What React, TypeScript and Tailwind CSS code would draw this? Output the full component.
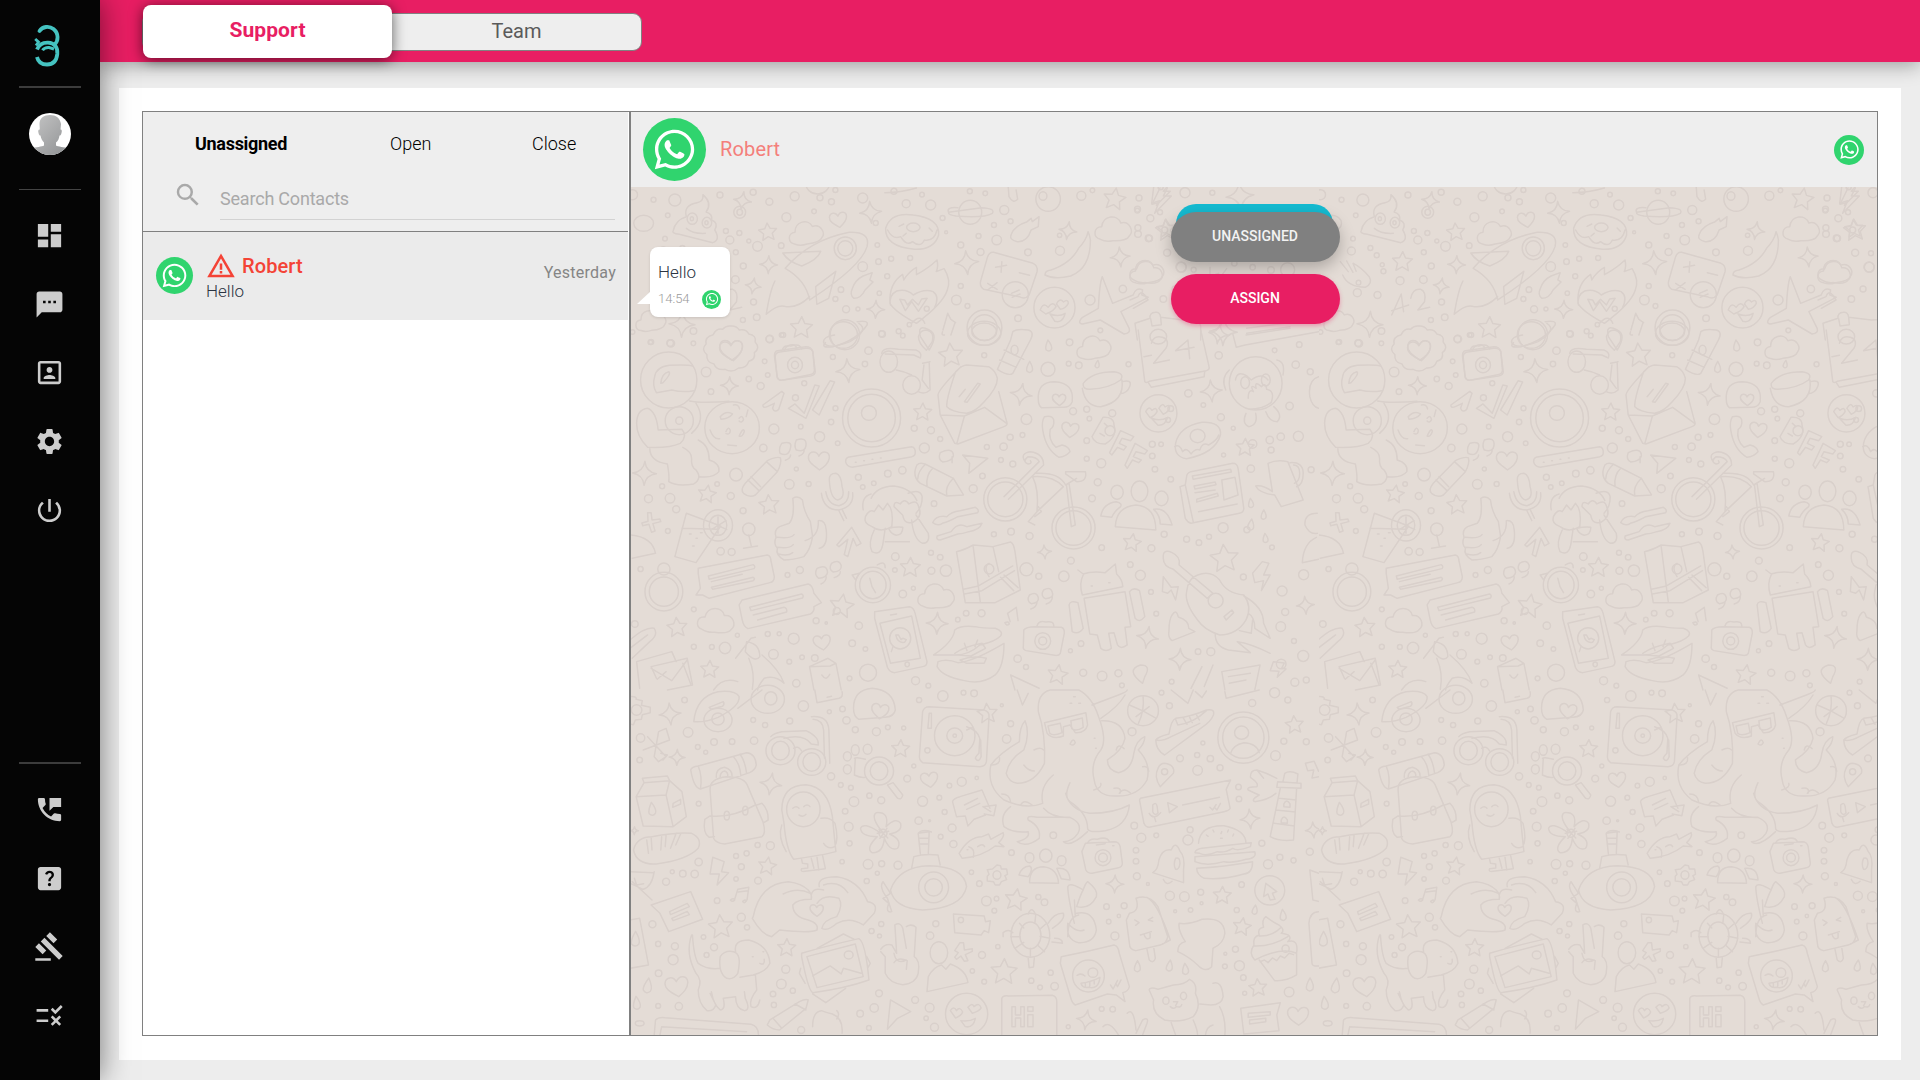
import React from "react";
import {
  MdDashboard,
  MdTextsms,
  MdPortrait,
  MdSettings,
  MdPowerSettingsNew,
  MdPermPhoneMsg,
  MdHelpCenter,
  MdGavel,
  MdRule,
  MdSearch,
  MdWarningAmber,
} from "react-icons/md";
import { FaWhatsapp } from "react-icons/fa";

/* ---------- Chat wallpaper: a 688px wide tile of outlined doodles ---------- */

type Mark = [number, number, number];
type Oval = [number, number, number, number];

interface Band {
  ox: number;
  oy: number;
  sx: number;
  sy: number;
  dots: Mark[];
  stars: Mark[];
  sparks: Mark[];
  hearts: Mark[];
  clouds: Mark[];
  drops: Mark[];
  ovals: Oval[];
  paths: string[];
}

const STAR = "M0-1 L.3-.38 L1-.3 L.48.18 L.62.88 L0 .52 L-.62.88 L-.48.18 L-1-.3 L-.3-.38Z";
const SPARK = "M0-1 Q.12-.12 1 0 Q.12.12 0 1 Q-.12.12-1 0 Q-.12-.12 0-1Z";
const HEART = "M.1.9 C-.5.5-1 .2-.95-.3 C-.85-.85-.2-.85 0-.35 C.3-.95 1-.8 .95-.2 C.9.3.5.6.1.9Z";
const CLOUD = "M-.7.6 C-1.15.5-1.1-.1-.65-.1 C-.6-.75.2-.85.4-.35 C.9-.5 1.15.1.9.35 C.8.6.3.65 0 .65 C-.3.72-.5.7-.7.6Z";
const DROP = "M0-1 Q.7.1.45.6 Q0 1.1-.45.6 Q-.6.1 0-1Z";

const bands: Band[] = [
  {
    ox: -19, oy: -7, sx: 0.3954, sy: 0.3333,
    dots: [
      [52,44,5],[105,59,2.5],[159,60,6],[141,106,2.3],[273,45,3],[357,37,3],[398,65,3.5],[441,112,4.5],[462,49,4.5],[511,94,2.3],[526,53,3],[555,65,3],
      [565,30,2.5],[634,54,5],[713,34,3],[744,71,4],[784,44,2.3],[806,75,5],[836,114,2.5],[905,34,2.5],[944,40,2.3],[992,90,4.5],[966,135,2.5],
      [1008,124,2.5],[1187,47,4.5],[1215,31,2.3],[1329,88,3],[1386,97,2.5],[1330,143,3],[1357,175,3.3],[1404,218,3.5],[1444,220,2.5],[1439,261,5],
      [134,176,2.3],[130,213,4],[178,204,2.5],[194,226,2.5],[208,254,2],[298,180,4],[288,153,2.5],[322,159,2.5],[368,199,4.8],[428,197,2.8],
      [313,217,2.5],[332,258,3],[346,183,2],[211,274,2.5],[253,302,4],[312,299,3.8],[196,345,3.5],[145,338,4],[148,308,2.3],[358,366,3],
      [366,412,3.3],[331,420,2.5],[206,453,3.3],[147,489,3.3],[97,487,2.3],[52,456,2.3],[667,129,2.5],[671,195,2.3],[706,236,2.5],[754,234,2.5],
      [674,245,2.8],[634,260,4.8],[696,289,2.5],[676,340,2.2],[579,329,2.8],[565,357,2.5],[882,318,2.5],[871,360,4.8],[899,378,2.4],[845,157,1.5],
      [882,195,3],[932,216,3.5],[927,168,2.5],[973,180,4.8],[1052,217,3.3],[1133,212,4.5],[1132,166,2.2],[1209,360,5],[1292,327,3.7],[1424,327,3],
      [1235,451,2.4],[1027,415,3.3],[682,461,3],[725,454,2.5],[752,434,2.2],[796,386,2.5],[592,388,3.5],[622,387,2],[398,477,3.5],[429,465,2.3],
    ],
    stars: [[394,156,9],[259,245,10],[1271,57,11],[1403,150,11],[479,443,11]],
    sparks: [[654,97,11],[396,254,9],[357,318,8],[897,248,12],[667,388,9],[1153,152,9],[1285,231,10],[177,433,13],[330,62,9]],
    hearts: [[572,118,9],[301,508,12]],
    clouds: [[491,159,17],[1268,147,18],[1352,277,16],[98,422,15]],
    drops: [],
    ovals: [
      [323,97,15,18],[323,97,7,9],[203,116,13,17],[240,128,12,16],[202,116,4,6],[239,128,4,6],[590,205,28,34],[590,205,19,23],[520,10,30,32],
      [762,142,17,13],[906,97,29,36],[1103,57,31,37],[1090,48,10,13],[942,443,44,53],[942,443,32,39],[1020,344,33,39],[1119,383,52,61],
      [589,464,37,45],[80,130,25,24],
    ],
    paths: [
      "M155 152 Q160 120 188 110 Q180 75 215 68 Q232 65 230 44 Q255 70 238 96 Q255 102 252 120 Q270 128 260 150 Q275 180 255 188 L170 163 Q150 160 155 152Z M188 145 Q205 162 236 160",
      "M438 265 Q500 180 600 157 Q655 155 645 200 Q630 260 500 360 Q490 300 438 265Z M432 219 L528 214 Q520 240 480 258 Q445 245 432 219Z M566 274 L515 320 L518 373 L548 355Z M412 303 Q400 330 390 403 Q420 370 440 380 Q470 385 500 350",
      "M692 145 Q705 95 762 105 Q830 115 826 165 Q815 210 765 208 Q690 200 692 145Z M697 150 Q710 180 730 170 Q745 200 760 185 Q780 205 790 180 Q815 185 822 150 M726 139 l12-7 M736 168 l8-8 M802 144 l8 10",
      "M851 97 Q845 80 875 83 M935 83 Q970 85 962 100 Q940 115 870 108 Q850 105 851 97Z",
      "M1010 162 Q1018 137 1050 125 L1060 115 L1063 125 L1080 110 L1078 140 L1060 150 Q1050 187 1025 185 Q1003 180 1010 162Z",
      "M608 325 Q615 300 635 288 L658 278 L652 300 L660 306 L640 330 Q630 355 612 355 Q600 345 608 325Z",
      "M1204 155 Q1208 165 1210 180 Q1210 265 1160 288 Q1120 300 1095 285 Q1095 272 1110 270 Q1160 250 1180 205 Q1200 180 1204 155Z",
      "M703 370 Q700 310 735 283 L738 300 Q750 275 770 262 L770 284 Q800 265 822 240 Q826 260 820 275 L840 266 Q858 300 848 330 Q838 370 770 430 Q715 395 703 370Z M762 345 Q745 325 720 333 Q700 345 704 375 M762 345 Q790 325 812 335 Q830 350 815 385 M728 358 L742 392 L758 365 L775 394 L797 355 L783 357 L775 375 L760 358 L747 375 L740 360Z",
      "M965 217 L1065 250 Q1078 257 1075 275 L1055 345 Q1045 360 1030 350 L940 328 Q928 318 933 300 L950 230 Q955 215 965 217Z M970 262 l28-6 M986 245 l-2 32 M1030 278 l26 8 M950 310 l24 18 M974 308 l-24 22 M1010 340 l20-10 M1012 352 l20-10",
      "M1240 290 L1266 370 L1318 345 Q1325 320 1342 330 L1340 345 L1356 352 L1287 395 L1308 445 Q1312 460 1295 462 L1235 420 L1190 432 Q1175 430 1190 412 L1230 385 Q1233 310 1240 290Z",
      "M1083 390 q8-25 20-8 q12-20 20-2 q-6 14-26 22Z M1124 372 q8-20 18-6 q12-10 12 4 q-6 15-20 18Z M1108 402 Q1130 412 1146 400 Q1140 430 1120 424Z",
      "M232 405 L256 342 L262 395 M232 392 L275 375 M280 355 Q285 325 305 328 Q320 335 315 365 L298 390 L328 382",
      "M102 245 l20 30 M118 243 l16 34 M134 250 l8 24 M108 285 Q120 320 165 322 Q185 310 175 290 Q155 262 135 250",
      "M1002 20 l2 30 q10 22 22 8 l-4-28 M690 38 q40 0 80-14 M1370 20 l-5 50 l20-8 l-8 14 l35-42 l-18 0 l12-16",
      "M300 438 q14-2 22 12 q18-4 24 12 q20 4 16 24 q14 18-2 32 q4 20-14 26 q-6 22-26 20 q-16 16-34 4 q-22 4-28-16 q-20-4-18-28 q-16-16-2-32 q-4-22 18-28 q8-20 24-16 q8-12 20-10Z",
      "M418 512 L490 500 Q505 500 508 515 L512 570 Q512 582 500 584 L430 601 Q420 602 418 590 L411 530 Q410 515 418 512Z M430 512 q4-16 14-14 q20-10 24 8",
      "M540 488 Q525 505 560 500 Q620 480 645 435 Q650 420 620 425 M775 470 q4-20 20-20 q22 6 15 35 l-15 26 q-20-22-20-41Z M849 400 l8 18 l12 10 M849 400 l-12 50 M867 430 l-10 35 M836 455 q-4 12 5 10",
    ],
  },
  {
    ox: 499, oy: -7, sx: 0.3333, sy: 0.3333,
    dots: [
      [92,22,2.5],[165,38,5],[247,38,2.5],[22,92,2.3],[61,115,3.5],[27,54,3],[24,162,3.3],[58,175,3.2],[154,262,5],[191,269,2.5],
      [313,250,2.7],[368,262,2.7],[473,269,7],[423,270,3.3],[100,357,3.3],[104,150,3],
    ],
    stars: [[108,146,9]],
    sparks: [[330,48,14],[280,455,14]],
    hearts: [],
    clouds: [[50,275,17]],
    drops: [],
    ovals: [[85,470,25,22]],
    paths: [
      "M90 24 L66 73 L86 68 L74 100 L124 48 L100 48 L112 24",
      "M240 262 l0 28 l26-10 l-6 26 l30-40",
      "M0 360 L24 350 Q30 330 44 345 L54 360 L10 385 M15 430 L60 415 Q58 398 76 397 Q90 395 92 412 L160 420 Q210 415 212 440 L212 480 M15 430 L22 480 M62 416 l4 22 l28-4 l-2-22 M350 445 L475 428 M350 460 L480 440",
    ],
  },
  {
    ox: -1, oy: 143, sx: 0.44, sy: 0.3333,
    dots: [
      [48,36,2.5],[93,40,3.7],[144,40,2.3],[318,27,3.7],[348,15,2.5],[306,94,2.3],[313,135,2.3],[270,147,2.7],[297,168,3.5],[173,126,4.8],[184,185,2.8],
      [396,160,2.5],[376,203,3],[461,81,2.5],[542,62,3.7],[534,102,2.7],[573,12,3.3],[620,17,2.3],[467,235,2.5],[457,276,2.7],[388,290,2.3],
      [327,297,5],[303,354,3.7],[431,320,5],[472,340,2.3],[646,295,3],[684,301,3.5],[705,327,2.5],[669,354,5],[805,76,2.5],[901,268,5.3],
      [892,315,2.4],[864,322,3],[849,350,3.7],[811,351,2.5],[843,390,2.4],[870,402,3],[801,438,2.8],[780,476,4],[950,118,7],[999,37,3.3],
      [997,101,2.4],[1020,106,3.3],[1133,103,2.5],[1007,244,3.5],[1038,238,3],[1044,266,2.3],[1096,250,3.5],[1091,302,5],[1038,332,2.8],
      [1038,386,2.5],[1071,400,4.5],[1063,457,3.5],[1050,505,3.4],[1338,76,3.7],[1269,190,3.7],[1303,225,2.3],[1229,236,2.8],[1223,270,2.4],
      [1343,262,3.5],[1371,295,2],[1415,342,4.2],[1454,330,3.7],[1479,320,3.7],[1519,319,5],[1187,343,3],[1207,343,2.3],[1187,378,2.8],[1349,375,2],
      [1411,416,3.7],[1499,228,3.7],[1513,104,3.7],[1546,125,3],[1465,61,2.3],[1521,44,2.8],[1457,360,3],[1193,418,2.8],[1229,448,2.8],[1548,419,3],
      [241,434,6.3],[378,417,2],[362,463,4.8],[406,462,2.5],[257,542,3],[229,498,3.5],[198,462,2.3],[73,469,2.5],[42,506,4],[91,505,4.8],
      [105,538,3.5],[86,603,2.4],[206,664,3.7],[231,666,3.5],[24,717,2.6],[519,442,3],[529,471,2.3],[554,460,2.3],[586,431,3.3],[619,421,3.7],
      [691,521,2.8],[827,613,2.5],[866,605,3.3],[908,618,3.5],[684,668,2.5],[705,682,2.8],[603,680,3.8],[602,720,2.3],[685,722,3.5],[718,722,5.7],
      [644,775,2],[620,792,3.8],[901,718,6.5],[929,739,3],[986,739,5.2],[1002,692,3.4],[1072,653,2.8],[1185,655,3.5],[1214,613,3],[1265,628,3],
      [1348,593,5],[1402,599,3],[1293,638,2.8],[1316,620,2.5],[1160,736,5],[1137,704,2.8],[1184,786,2.4],[1196,851,2.4],[1394,741,3],[1531,734,5],
      [1482,783,5],[1489,846,3.5],[1459,652,2.4],[1479,890,4.8],[1509,933,2.5],[1530,978,5.5],[1480,1002,4.8],[386,720,3.5],[358,735,2.4],
      [470,843,3.5],[423,872,3],[446,879,1.2],[372,926,5.5],[313,912,2.5],[339,911,2],[326,973,4.8],[391,982,2.3],[362,995,2.4],[420,984,3.3],
      [520,887,3.7],[505,940,3.3],[535,957,2.3],[499,1045,2.4],[541,1028,8.5],[649,1052,4],[678,1067,2.4],[764,850,2.8],[799,850,3.5],[745,869,2.3],
      [378,1060,3.7],[216,954,5.7],[145,950,2.5],[186,951,2.4],[244,916,2],[11,882,3.3],[145,838,2.4],[1025,941,2.8],[1001,962,2],[881,986,3.7],
      [900,1011,2.5],[1030,1028,3.5],[1073,1038,4.8],[1110,1030,3.5],[1118,1066,2.4],[1291,965,2.8],[1320,965,4],[1231,1055,2.4],[1511,1057,4],[1537,1050,3],
    ],
    stars: [[729,75,12],[665,246,9],[175,492,9],[316,524,10],[1398,352,9],[1141,638,9],[1351,685,14],[637,712,10],[481,828,12],[107,892,10],[181,1018,9],[972,1034,10]],
    sparks: [[495,122,12],[226,167,9],[889,193,11],[1321,183,11],[33,430,12],[1338,12,10],[942,666,7],[698,880,11],[1176,922,11],[1535,826,9],[1250,988,11]],
    hearts: [[230,60,12],[429,390,11],[1000,298,9],[436,936,9],[975,208,7]],
    clouds: [[1054,52,17],[696,798,18],[196,872,18]],
    drops: [[951,48,6],[908,112,6],[1062,103,4],[1411,520,5],[1440,555,5],[1411,585,6],[1444,625,5]],
    ovals: [
      [375,105,17,23],[375,105,8,11],[549,264,66,87],[549,264,54,71],[543,249,17,22],[232,293,62,78],[112,272,32,42],[112,272,8,11],[88,150,64,84],
      [1201,250,42,56],[1290,318,17,20],[1422,160,60,80],[1398,158,10,18],[1445,150,10,18],[853,508,49,65],[853,508,40,52],[1008,594,49,63],[1008,594,40,52],
      [1107,487,14,21],[1158,484,19,31],[1208,505,15,22],[200,586,33,47],[200,586,20,30],[270,598,14,19],[77,785,43,58],[77,785,33,44],[77,717,14,18],
      [552,765,40,53],[552,765,30,41],[614,925,24,32],[630,1003,5,7],[938,933,18,25],[938,933,9,12],[1331,812,17,22],[805,10,38,36],[805,5,28,26],
      [588,95,20,32],[640,165,20,28],[816,717,11,15],[874,60,8,14],[485,15,32,40],
    ],
    paths: [
      "M340 66 L400 55 Q415 54 416 70 L421 125 Q421 135 410 138 L345 151 Q335 150 334 140 L330 80 Q330 68 340 66Z M350 64 q5-20 15-16 q22-10 25 10",
      "M56 140 Q60 110 90 106 Q130 103 142 108 M56 140 Q50 165 60 188 Q75 185 95 180 Q120 188 145 182 M70 160 Q72 130 88 125 Q95 130 75 158Z",
      "M40 235 Q60 245 64 300 L118 298 Q132 320 114 340 Q90 355 40 352 Q15 320 15 280 Q16 238 40 235Z M135 213 Q160 220 225 214 M45 355 Q45 395 85 402 Q90 440 88 455 Q105 470 145 462 Q165 445 150 420 Q138 410 140 385 Q140 365 120 352 M155 330 Q180 345 180 390 Q205 400 202 425 Q190 445 158 440 M150 220 Q175 270 140 310",
      "M205 260 q14-20 28-8 q-8 14-26 16Z M235 225 q12-4 14 12 M182 300 q8 30 22 26 M222 345 l20 2 M268 240 l-4 20 M248 265 q8-12 10 4 q-4 12-10 4 M218 305 q6-18 10-4 q0 14-10 10 M248 318 q10-28 12-14 q-4 18-12 14",
      "M302 225 L345 184 L350 190 L338 238 Q328 250 324 235 L328 220 L312 230 Q302 236 302 225Z",
      "M360 235 L375 222 L396 250 L420 165 L430 168 L400 265Z M415 240 L455 152 L465 156 L430 255Z",
      "M572 70 Q575 50 610 58 L650 60 Q665 68 660 84 L645 75 L580 72 M605 120 Q625 125 640 135 M680 95 L682 180 Q670 195 655 185 M665 100 L682 95 M668 105 L664 150 L678 175",
      "M440 38 Q450 60 500 35 Q545 0 520-20 M440 38 Q438 20 465 15 M870 5 Q880-5 905 0 Q920 5 910 30 L870 130 Q860 140 835 118 L865 30Z M850 60 l45 28 M840 90 l38 22 M640-20 q20-30 30 0 M660 20 q-8-40 20-20 q22 14 0 60Z",
      "M765 105 L815 110 Q830 120 835 145 Q835 175 805 215 Q785 245 765 250 Q730 245 720 230 Q718 210 740 125 Q755 105 765 105Z M752 110 Q700 180 700 195 L705 255 L738 340 L745 342 L850 290 Q860 285 856 275 L838 185 M705 255 L760 258 L743 340 M760 258 L806 232 L856 280 M748 200 l14-22 M760 215 l30-55 l6 2 l-30 55Z",
      "M1155 0 L1170 155 Q1172 160 1180 154 L1310 122 Q1318 118 1316 110 L1297 0 M1168 80 L1185 76 M1178 158 L1185 172 L1305 140 L1306 125 M1185 40 Q1190 15 1210 22 Q1228 30 1218 55 L1190 100 L1226 90 M1268 30 L1240 62 L1282 52 M1268 30 L1272 86",
      "M1030 160 Q1050 125 1100 125 Q1125 130 1115 150 Q1090 175 1045 178 Q1028 178 1030 160Z M1028 175 Q1035 230 1070 230 Q1125 215 1118 150 M1118 155 q24-8 18 14 q-6 22-22 22",
      "M942 260 Q935 275 938 300 Q945 360 975 382 Q990 380 1000 365 Q998 350 982 345 L968 352 Q950 330 955 298 Q965 290 963 270 Q960 255 942 260Z",
      "M928 210 Q925 155 965 155 Q1010 158 1005 215 Q1000 232 985 232 L935 233 Q928 225 928 210Z",
      "M1075 262 Q1100 260 1100 285 Q1108 320 1080 342 Q1055 342 1050 320Z M1078 280 l8 10 M1068 310 l10 8 M1115 302 L1145 320 L1138 332 L1118 325 L1112 340 L1128 350 L1122 360 L1108 352 L1095 375 L1090 368Z M1148 340 L1176 362 L1170 372 L1150 365 L1144 380 L1162 390 L1156 398 L1142 390 L1130 415 L1125 405Z",
      "M1172 245 q8-20 14-4 q12-12 12 4 q-6 14-16 18Z M1202 235 q8-20 14-4 q12-12 10 6 q-6 12-14 16Z M1185 265 Q1205 275 1222 262 Q1216 288 1200 286Z",
      "M1240 340 Q1248 290 1300 277 Q1345 275 1342 315 Q1330 370 1265 386 Q1235 380 1240 340Z M1238 350 Q1248 340 1256 365 Q1265 350 1275 372 Q1285 355 1295 360 Q1300 335 1315 345 Q1335 330 1338 315",
      "M1376 150 q4-30 26-12 l10 12 q24-24 38 0 M1362 120 q-20 25-8 60 M1470 90 q20 5 14 45 M1405 205 q0-30 12-20 q-10-25 6-10 q-4-25 12-5 q10-15 12 8 q20 5 10 40 q-20 20-50 20 M1400 250 q-10 30 6 40 q22-5 16-40 M1445 245 q8 30 26 30 q14-20-8-45",
      "M345 340 q-8 15-4 30 q20 12 24-18 q4-20-20-12Z M365 375 q0 10-12 16 M378 330 q-6 18 0 30 q20 8 22-14 q2-26-22-16Z M396 362 q-2 12-12 16 M705 368 q-6 20 6 28 q20-2 24-18 q0-28-30-10Z M732 380 l0 18",
      "M495 382 L640 350 Q650 352 648 372 Q646 380 635 382 L505 412 Q492 410 490 395 Q490 385 495 382Z M512 397 h2 M531 392 h2 M550 388 h2 M569 384 h2",
      "M262 460 L312 392 Q335 378 342 384 Q345 400 335 425 L285 495 Q272 505 258 490 Q250 480 262 460Z M310 395 L335 425 M268 450 l25 32 M275 440 l22 30",
      "M652 405 Q660 395 675 405 L735 445 L758 495 L720 498 L660 460 Q640 440 652 405Z M735 445 Q715 470 720 498 M688 415 Q672 435 675 470 M672 402 q-18 22-18 45 M756 375 L813 385 L770 430 L772 400Z",
      "M453 450 Q452 430 468 430 Q480 435 482 470 Q490 505 472 510 Q455 505 453 450Z M435 490 Q440 540 475 540 Q510 530 506 488 M445 485 Q450 525 475 527 Q498 520 497 485 M474 540 L486 572 M482 538 L492 565",
      "M370 505 Q382 495 392 510 Q395 545 410 575 L415 620 Q410 660 395 680 Q370 690 350 690 Q330 675 335 655 Q325 640 332 622 Q326 600 340 590 L362 580 Q375 560 370 505Z M335 622 q30 5 38-8 M335 652 q28 5 36-8 M338 672 q20 8 32-4 M398 632 Q430 620 428 572 Q445 570 446 600 Q450 650 430 655",
      "M535 560 Q545 535 555 545 L565 525 L575 540 L585 520 Q600 540 595 590 Q570 610 550 590 Q530 580 535 560Z M600 530 q0-20 14-8 q10-20 20 0 q18-15 22 8 q10 30-12 46 q-20 10-24-20Z M548 505 Q560 470 600 468 Q640 475 652 512 M632 490 Q660 475 664 500 Q665 530 650 550 M548 492 Q525 500 530 540 M588 595 Q605 590 620 592 Q620 615 605 616 Q592 612 588 595Z M555 600 Q540 640 550 665 Q570 680 575 640 L580 595 M640 570 Q645 630 665 640 Q682 640 678 610 L650 555 M580 635 h55",
      "M688 578 Q695 555 720 560 Q730 545 750 542 L785 532 Q795 540 790 548 L745 560 Q725 575 710 580 Q700 590 688 578Z M698 618 L730 605 Q745 575 765 590 L800 580 Q795 600 770 605 Q755 612 745 612 L705 630 Q695 630 698 618Z",
      "M470 645 L504 592 L525 640 L515 648 L507 625 L495 680 L487 674 L495 628 L475 650Z",
      "M850 500 L930 395 Q925 380 905 380 Q890 395 905 402 Q915 400 910 392 M860 508 L940 405 Q940 370 910 365 Q885 370 898 395 M915 440 Q960 435 985 470 L925 545 Q930 480 915 440Z M920 430 Q975 425 990 465 L1015 445 M990 425 L1035 425 Q1040 455 1015 455 L990 432Z M992 465 L1003 590 L1012 585 L998 462 M925 545 L905 575 L920 585 M928 530 L935 545 L920 560",
      "M1103 590 Q1105 530 1150 525 Q1195 530 1195 600Z M1070 558 Q1075 520 1105 515 Q1120 520 1115 530 Q1100 545 1095 562Z M1190 538 Q1220 530 1232 585 L1205 582 Q1205 555 1190 538Z",
      "M1265 440 Q1265 430 1275 425 L1370 400 Q1380 400 1382 415 L1395 535 Q1395 548 1385 550 L1275 580 Q1268 578 1262 565 L1250 470 L1262 465 L1280 575 M1262 465 L1265 440 M1278 438 L1365 418 l2 8 L1280 448Z M1282 468 L1330 456 l2 8 L1284 477Z M1284 488 L1330 480 M1288 508 L1335 490 l2 8 L1288 516Z M1292 545 L1380 522 M1345 450 L1375 442 L1382 495 L1350 510Z",
      "M1450 400 Q1470 388 1495 395 L1530 510 L1480 530 L1465 495 Q1430 490 1422 468 Q1440 465 1460 485 L1450 400Z M1500 398 Q1530 395 1530 430 Q1530 465 1515 470 M1508 405 Q1522 405 1522 430 Q1522 455 1510 460",
      "M128 550 L206 588 L150 698 L102 680Z M118 595 L200 598 M135 612 h4 M160 608 h4 M150 625 h3 M142 648 h4 M200 560 v50 M182 575 l38 24 M218 572 l-34 28 M258 655 L290 648 M270 615 L276 650",
      "M40 548 l8 0 l2 22 l18-3 l2 8 l-18 6 l5 22 l-8 4 l-6-24 l-14 4 l-2-8 l14-5Z M0 615 Q50 620 58 670 L5 685 M1562 550 q-30 0-28 35 q10 30 28 25 M1560 622 Q1530 640 1528 698 L1565 688",
      "M155 715 L312 675 Q320 678 320 690 L328 740 Q328 755 318 758 L180 805 L165 795 L150 795 L160 775 L155 730Z M178 738 L280 704 q6 5 2 12 L180 748Z M185 755 l70-22 M185 772 L280 742 q6 4 0 10 L188 778Z",
      "M255 810 L405 762 Q415 765 418 790 L435 818 L418 830 Q420 845 410 852 L268 896 Q258 890 255 870 L248 825Z M272 832 L390 792 q6 4 2 12 L275 842Z M280 855 L350 832 q8 2 6 14 L290 870",
      "M425 715 q-8 18 4 30 q18-2 20-18 q-2-26-24-12Z M446 740 q0 15-12 22 M458 700 q-8 18 4 26 q20-2 18-20 q-6-20-22-6Z M478 725 q0 12-14 18 M908 795 q-8 18 4 26 q18-2 16-18 q-4-20-20-8Z M925 815 q0 16-14 22 M940 780 q-8 18 4 26 q20-2 16-18 q-4-20-20-8Z M960 800 q0 16-14 22",
      "M556 845 L635 830 Q645 832 648 850 L675 995 Q675 1008 665 1010 L602 1028 Q590 1028 585 1012 L556 865Z M568 880 L640 858 L660 985 L592 1000Z M592 855 L606 852 M604 915 q4 26 20 22 l4-8 l-8-4 l-4 4 l-6-14Z M594 965 l4-16",
      "M742 665 Q760 660 780 645 L825 650 L865 636 Q872 640 875 665 L887 780 L830 818 L762 818Z M758 778 L792 768 L870 708 M760 792 L800 782 L874 722 M842 742 l30 40 M850 735 l32 38 M816 740 q-14-30 0-40 M780 650 L796 815 M825 650 L838 725",
      "M690 975 Q735 935 738 900 Q750 885 785 890 Q800 895 830 895 Q850 905 842 918 Q830 935 795 945 Q770 975 740 975Z M700 995 Q720 985 745 998 Q780 995 850 940 Q850 1010 830 1035 Q800 1065 760 1052 Q710 1040 698 1010Z M738 970 Q760 950 800 940 L808 955 L775 978 L745 975 M750 990 q30-15 60-5 L805 1000 L765 1000Z M760 940 l6 22 M790 930 l-6 20",
      "M895 900 Q900 890 920 890 L980 892 Q988 895 987 910 L978 970 Q975 978 965 976 L900 962 Q892 958 894 948Z M925 888 q4-18 20-12 q20-5 18 16 M1018 720 L1030 732 Q1050 722 1080 728 L1103 702 L1106 732 Q1120 750 1120 770 L1028 795 Q1020 760 1030 735 M1032 805 L1125 785 L1138 890 L1125 892 L1130 945 Q1115 960 1108 945 L1100 908 L1088 910 L1094 955 Q1082 968 1070 955 L1062 915 L1045 912Z M998 825 Q1000 810 1018 818 L1030 895 Q1020 915 1005 905Z M1135 785 Q1145 770 1158 782 L1170 860 Q1158 880 1148 865Z M1048 768 h3 M1088 758 h3",
      "M1212 685 Q1210 655 1232 668 Q1252 680 1248 705 L1325 790 L1312 805 L1235 718 Q1212 710 1212 685Z M1290 735 Q1320 720 1340 750 Q1355 790 1395 795 Q1415 830 1400 870 Q1380 915 1340 915 Q1305 900 1290 870 Q1260 820 1265 785 Q1268 745 1290 735Z M1350 860 L1368 840 L1372 848 L1355 870Z M1395 798 Q1440 830 1440 880 L1455 925 L1420 895 Q1420 860 1405 850 M1415 870 L1412 910 L1385 902 M1330 912 Q1330 950 1360 960 L1410 968 L1380 935 Q1410 940 1455 970",
      "M1437 695 L1415 730 L1420 758 L1440 752 L1435 782 L1455 735 L1440 735 L1452 700Z M1212 740 L1210 785 L1222 790 L1230 780 L1240 810 L1246 770 L1230 772Z M1232 855 q10-20 14 6 Q1270 870 1270 895 L1284 905 L1232 932 Q1222 925 1225 900 Q1225 870 1232 855Z",
      "M878 832 L858 850 L864 875 M878 832 L882 872 M852 878 q8-6 10 4 q-6 8-10-4Z M505 735 l16-5 l-8 20Z M562 705 q18-15 18 8 M545 745 l5 25 l8 18",
      "M15 995 L95 965 L105 995 M48 1010 L130 985 L142 1065 L85 1080 M48 1010 L60 1045 M15 995 L22 1075 M48 1015 L95 1052 L130 990 M62 1048 L82 1025 M120 1000 L138 1062 M0 930 Q35 890 55 895 Q65 915 45 935 L5 985 M0 955 L40 915",
      "M265 935 Q295 940 295 980 Q285 1000 262 965Z M240 985 L275 925 L285 922 M300 975 Q340 1020 350 1060 Q330 1035 305 1045 Q290 1070 290 1080 M270 985 Q285 1030 278 1078 M190 1080 Q210 1040 245 1055",
      "M408 1010 L450 985 L468 1000 L480 1080 M408 1010 L418 1080 M408 1010 L455 1008 L468 1000 M436 1035 q10 20 18-2 M865 1035 L930 1075 M865 1035 L875 1080 M1160 1005 q26 0 10 35 l-5 20 q-40-40-5-55Z M1275 1075 L1300 1010 M1305 1070 L1325 1005 M1345 1025 L1432 1005 L1420 1080 M1345 1025 L1352 1080 M1360 1040 L1410 1030 M1362 1060 L1400 1050 M1462 995 l25 4 l-6 16 l10 2 l-20 25 l4-18 l-20-2Z",
      "M1370 12 L1378 52 L1398 45 L1565 5 M1400 15 L1500-5",
      "M1565 140 Q1540 150 1545 200 Q1550 230 1565 235",
    ],
  },
  {
    ox: -1, oy: 503, sx: 0.44, sy: 0.3333,
    dots: [
      [124,30,2.8],[132,127,4.8],[24,144,4.2],[191,156,3.3],[232,155,2.8],[282,152,3.7],[154,171,2.4],[172,187,2],[22,210,2.8],[280,90,2.4],[307,105,2.6],
      [363,93,3],[394,48,5.2],[453,65,2],[483,57,2.8],[492,91,3.7],[512,119,3],[560,125,4],[586,112,2.4],[622,114,2],[657,30,2.6],[711,18,5.2],
      [758,8,2.4],[782,10,3.3],[865,101,3],[856,147,4.2],[845,46,1.5],[457,259,3.6],[479,285,2.4],[502,293,2.4],[509,335,4.8],[544,317,2.6],[571,331,3.5],
      [489,364,2.8],[497,410,4.4],[499,460,2.6],[630,266,3.4],[645,228,2],[665,334,5],[703,323,2.4],[754,275,4.5],[788,264,1.7],[726,287,2.3],
      [656,392,3.7],[681,392,1],[715,366,2.5],[732,414,4],[706,440,2.4],[735,462,3.6],[156,341,2.4],[290,465,2.6],[319,467,4],[265,490,2.6],[241,498,2.5],
      [156,516,3.7],[253,530,3],[291,572,3.4],[241,567,2.2],[96,545,2],[120,551,3.3],[147,552,3.7],[82,575,3.5],[198,632,2.8],[253,682,4],[266,712,2.6],
      [51,703,3.5],[64,762,2.6],[102,769,3.5],[98,809,5],[65,850,3.3],[64,948,2.4],[111,949,3.7],[167,741,2.3],[191,772,3.5],[174,795,2.5],
      [541,523,4.8],[572,521,3],[609,526,4],[562,550,2],[538,573,2.6],[482,515,2.2],[571,702,2.6],[549,723,2.6],[567,738,2],[682,737,3.7],
      [695,701,3],[776,547,2.2],[794,581,2.8],[810,633,4.8],[833,626,2.3],[828,662,2.4],[800,795,3.5],[836,770,2.2],[778,843,2.2],[805,875,2.4],
      [867,488,2.8],[928,621,2.6],[942,637,3.3],[1083,650,2.8],[1123,647,3],[1088,695,2.3],[1111,678,1.7],[1102,738,4],[1152,559,3.5],[1177,582,1.5],
      [962,436,3.3],[1146,407,3.3],[1162,443,4.5],[1196,436,2.4],[1150,481,2.8],[1150,514,2.8],[1141,125,4],[1226,47,3],[1208,8,2.4],[1302,159,2],
      [1289,195,2.6],[1250,205,3.4],[1319,206,3.2],[1290,241,4.8],[1341,233,3],[1383,291,2.8],[1384,327,2.8],[1273,419,3],[1268,450,5],[1414,39,3.6],
      [1465,8,5],[1495,30,3],[1467,197,4.8],[1486,154,3],[1537,155,3],[1436,460,3],[1450,523,4.5],[1477,502,3],[1508,511,2.6],[1545,485,3.5],
      [1390,584,2.8],[1379,660,2.6],[1297,607,3],[1260,620,4.8],[1227,617,4.5],[1299,640,1.5],[1239,664,1.5],[1274,660,2.3],[1376,778,3],[1385,827,5],
      [1353,791,1.5],[1352,829,2.4],[1394,863,2.8],[1397,910,2],[1498,906,4.8],[1490,776,3.6],[344,882,4.8],[370,902,2.6],[325,912,2.8],[327,945,2.6],
      [354,838,4],[566,910,3.4],[555,954,4.2],[523,971,3.3],[543,1014,2.4],[648,930,3.4],[681,953,4.4],[673,985,2.2],[692,1012,4],[389,1020,3.5],
      [912,872,2.6],[932,892,2.4],[965,889,3.8],[956,848,2.6],[996,1010,2],[1072,957,2.4],[1097,958,2.8],
    ],
    stars: [[812,70,10],[615,176,9],[312,528,9],[206,710,12],[356,773,9],[877,629,11],[1510,104,9],[1346,616,9],[1391,710,9],[1427,893,9],[850,845,13]],
    sparks: [[91,72,11],[107,202,8],[320,282,11],[1409,387,10],[1102,582,9],[1037,990,10],[1553,420,8],[10,422,4]],
    hearts: [[680,268,9],[424,660,7],[568,62,9],[106,888,12],[1518,976,11]],
    clouds: [],
    drops: [[50,358,7],[12,748,8],[40,888,8],[15,940,7],[1153,830,6],[1226,828,6],[1262,838,6],[1545,885,7],[1420,660,5],[1484,676,6]],
    ovals: [
      [313,28,38,42],[320,25,14,20],[200,90,32,35],[200,87,14,18],[342,182,33,42],[342,182,20,28],[413,216,32,40],[413,216,20,28],[394,358,38,52],
      [566,243,33,42],[566,243,20,28],[540,178,10,15],[512,180,9,16],[494,199,9,14],[494,238,9,14],[738,137,46,60],[738,137,18,23],[738,137,4,5],[676,181,6,8],
      [1166,62,35,45],[1394,143,58,77],[1394,143,47,62],[1390,128,16,20],[1215,245,7,9],[575,430,9,12],[690,592,34,46],[690,592,20,26],
      [834,555,9,13],[908,503,10,15],[945,497,14,20],[981,512,10,15],[1075,503,18,24],[1075,503,10,13],[1454,601,34,44],[752,690,6,8],
      [497,795,10,12],[702,788,20,33],[910,736,44,66],[910,736,24,40],[1042,858,36,48],[1052,848,11,14],[765,972,48,62],[15,60,12,16],
      [220,377,6,13],[262,362,6,13],[1218,932,7,11],[1258,918,7,11],[22,1000,10,8],
    ],
    paths: [
      "M145 95 Q150 20 200 5 Q240 0 248 20 Q250 50 200 82 Q170 98 145 95Z M180 52 L212 35 q4 8-2 14 L185 58Z M245 55 L300 0 M420 0 L425 38 L475 25 Q485 22 482 5 M448 22 l10-3",
      "M65 125 L82 115 L90 150 L30 180 M65 125 L55 200 L65 215 L82 200 L40 140 M75 210 l10-15 l-15-5",
      "M320 140 Q325 130 345 125 L400 122 Q430 140 428 165 L412 162 Q395 130 350 145 M412 80 Q450 75 452 120 L454 220 M416 88 Q438 90 440 120 L442 205 M372 175 q10-10 18 8",
      "M138 240 Q140 230 155 228 L265 188 Q285 190 287 225 Q285 240 272 248 L160 297 Q145 295 138 240Z M155 228 Q165 260 160 297 M235 200 Q250 220 252 258 M250 192 Q262 215 265 250 M196 262 Q195 235 215 232 Q232 238 232 258 M205 262 Q205 245 215 243 Q224 248 222 260",
      "M182 300 Q180 265 220 260 Q262 260 268 290 L302 395 Q310 430 300 440 L215 462 Q195 460 190 445Z M182 378 Q230 385 285 345 M182 378 L170 388 Q165 430 180 442 L192 440 M288 345 L300 340 Q315 360 314 390 L304 398",
      "M28 265 L85 258 L90 272 L32 278Z M32 278 L14 320 L82 315 L90 272 L118 305 L128 380 L98 410 L30 408 L14 320 M82 315 L98 410 M98 340 L115 328 L115 342 L97 352Z",
      "M8 480 Q15 440 50 440 Q110 425 140 430 Q165 445 155 475 Q130 510 60 522 Q15 525 8 480Z M38 450 L42 490 M48 440 L50 480 M72 440 L70 480 M82 436 L80 470 M105 430 L92 475 M115 432 L104 465",
      "M345 360 Q345 285 400 284 Q450 290 460 380 Q465 450 468 485 Q440 495 372 508 Q355 480 350 400Z M370 355 q8-10 14 0 M395 350 q8-10 14 0 M384 375 q10 8 16-2 M345 405 Q335 440 355 485 M434 385 Q455 380 466 400 Q475 450 465 470 Q450 480 440 460 M390 508 l2 12 l12 2 l0 12 l-14 2 q-4 10 8 8 l46-8 l-6-38 M412 505 l6 30 M425 502 l4 38",
      "M575 428 Q545 380 560 368 Q590 365 582 410 Q605 380 615 400 Q620 425 590 432 Q620 450 608 475 Q590 485 578 445 Q575 490 550 488 Q535 475 562 440 Q525 440 524 415 Q530 395 565 425 M562 430 l26-6 M568 445 l16-30 M566 418 l20 26",
      "M510 205 Q515 200 535 208 M512 205 L510 255 Q525 265 535 262 M585 285 L598 278 L620 315 Q618 330 608 325Z M508 55 Q508 0 550-5 Q600 0 603 60 Q600 80 580 82 L520 88 Q508 80 508 55Z",
      "M680 50 L805 60 Q817 65 816 80 L810 215 Q808 230 795 230 L665 218 Q656 210 658 195 L665 65 Q668 50 680 50Z M680 70 l5 0 l0 45 l-8 0Z M765 110 Q790 120 795 145 L793 190 Q785 200 785 205 Q792 220 798 200 L797 150 M780 112 L765 120",
      "M55 545 Q50 590 30 598 L0 580 M0 545 L52 548 M50 630 L5 575 M10 565 l5 20 l16-4 M48 645 L138 605 L165 688 L88 725 L68 670Z M90 665 L130 640 l5 10 L92 674Z M95 685 L130 664 l5 10 L98 692Z M188 502 L214 515 L208 545 L224 548 L198 585 L203 552 L182 552Z",
      "M245 598 L270 592 L266 630 M245 598 L238 628 M246 606 L268 602 M228 630 q8-8 10 0 q-5 8-10 0Z M256 634 q8-8 8 0 q-5 8-8 0Z",
      "M280 680 Q295 580 360 575 Q390 580 405 600 Q415 615 412 628 Q380 628 370 645 Q370 680 405 690 Q430 700 425 720 Q410 730 340 720 L322 740 Q300 735 278 685Z M412 625 Q410 590 440 600 M348 612 Q380 590 410 610 M430 590 Q425 560 470 560 Q520 570 540 635 Q565 640 555 670 L530 705 Q500 680 470 700 Q450 725 436 715 Q440 690 470 680 Q485 645 475 625 Q440 610 425 640 M440 585 Q475 570 495 608",
      "M640 535 L645 500 Q670 490 700 495 L705 525 M655 430 L680 425 L678 490 M655 430 L660 492 M656 445 h22 M657 462 h22 M592 600 Q610 530 680 527 Q760 530 765 590 Q755 655 665 660 Q600 655 592 600Z M592 610 L575 575 Q565 590 585 625 L595 665 Q580 670 588 640 L575 625Z M655 430 q10-14 30-4",
      "M748 490 Q770 440 800 440 L815 432 L820 448 L848 428 Q852 440 838 458 L850 470 L830 468 Q800 500 755 505Z M770 470 Q785 475 780 502 M790 470 q12-12 16 0 M766 479 h2 M733 335 Q735 325 750 320 L800 300 L818 355 M733 335 L742 380 L762 378 L768 408 L782 388 L808 375 M760 345 L790 325 M765 358 L795 340 M802 350 l30-5 l-5 32 l-22-5 M802 350 l18 15",
      "M928 65 Q925 10 955 0 L1020 0 Q1050 20 1065 80 Q1085 150 1070 180 Q1045 220 1055 270 Q1060 320 1105 318 Q1155 320 1175 270 Q1185 220 1155 180 Q1170 160 1170 140 Q1150 150 1145 190 Q1140 240 1110 248 Q1085 240 1085 210 Q1120 180 1125 145 Q1120 90 1072 92 M928 65 Q945 130 942 220 Q920 280 880 280 Q860 275 855 250 Q860 210 895 180 Q910 130 898 92 Q885 110 885 155 Q840 190 820 225 Q810 290 850 330 Q900 360 938 340 Q930 290 962 255 M990 310 Q1000 360 1045 370 Q1100 370 1135 345 Q1130 410 1080 422 Q1040 430 1040 415 Q1040 370 1000 335 Q985 320 1000 278 M865 350 Q840 375 850 410 Q870 430 905 425 Q910 445 880 455 Q900 475 930 445 Q935 410 905 390 Q900 375 925 382 L1000 382 Q1030 400 1018 430 Q1005 455 985 455 Q1000 475 1040 425 M940 355 Q960 385 1000 382 M942 98 L1036 68 L1040 105 Q1035 130 1012 128 L1000 105 L985 110 L985 138 Q960 150 948 130Z M950 108 l28-8 l4 28 q-20 12-28 2Z M1002 92 l26-8 l2 28 q-16 14-26 4Z M1050 45 L1110 15 Q1130 5 1130 0 M1070 85 Q1110 50 1125 15 M880 0 L892 45 L905 10",
      "M845 312 q18 0 20 24 M888 345 q6-20 26 0 M822 225 q20 0 18-22 M895 225 q10 18 24 18 M918 180 q14-10 22 0 M1105 180 q4-22 18-4 M1100 295 q18-4 14 14 M1112 310 q10-20 26 0 M1165 230 q12-4 14 14 M1054 300 q20-8 16-20 M1000 40 h4 M1008 20 h4 M1020 40 h4 M1000 162 q8-22 12-4 q-4 12-12 4Z M1055 145 h2 M1058 175 h2",
      "M1195 150 Q1200 140 1225 132 Q1230 90 1240 85 Q1275 80 1310 60 Q1330 55 1326 75 Q1320 95 1300 112 L1215 195 Q1195 180 1195 150Z M1240 88 L1245 105 Q1280 100 1310 62 M1258 85 l8 18 M1272 82 l6 16 M1288 76 l6 14 M1195 150 Q1210 155 1230 140 L1295 100 M1150 80 l30-30 M1135 45 Q1165 60 1196 85 M1166 18 Q1170 60 1155 102",
      "M1230 0 L1268 40 L1280 0 M1285 5 l15 18 l10-20 M1352 5 L1355 25 L1430 0 M1215 220 Q1240 225 1235 250 L1205 290 Q1190 260 1200 235 Q1205 220 1215 220Z M1365 190 Q1370 165 1395 158 Q1425 160 1430 188",
      "M1158 330 L1160 325 L1365 270 L1355 298 L1364 355 Q1362 362 1350 365 L1180 412 Q1172 412 1168 400Z M1188 345 q8-10 10 4 l2 20 q-8 10-12-4Z M1180 370 q10 22 26-2 M1192 382 L1195 395 M1222 338 L1244 350 L1226 368Z M1256 345 L1340 322 M1318 352 l6 8 l8-16 M1328 352 l6 8 l8-20",
      "M1410 260 Q1410 240 1425 240 Q1450 250 1470 265 M1410 262 Q1430 280 1425 290 Q1400 290 1405 300 Q1420 310 1430 315 Q1410 330 1420 335 Q1450 330 1468 310 M1425 240 L1440 265 M1472 275 L1525 280 L1525 295 L1470 292Z M1484 275 L1488 250 Q1500 240 1518 252 L1516 278 M1478 294 L1455 440 Q1475 455 1508 450 L1515 296 M1468 360 L1512 366 M1464 400 L1510 408 M1475 325 L1514 330 M1486 350 v-8 q6-18 14 0 v10Z M1480 398 v-8 q6-18 14 0 v10Z",
      "M1292 460 Q1295 405 1350 407 Q1400 420 1400 460 L1412 458 L1410 470 Q1380 485 1370 475 Q1350 490 1335 485 Q1310 500 1295 490 L1284 488 Q1285 478 1300 475 L1400 460 M1284 500 L1420 485 Q1425 505 1400 508 Q1370 520 1350 515 Q1310 530 1284 515Z M1288 535 Q1350 530 1415 515 Q1415 550 1395 552 Q1350 570 1305 565 Q1288 555 1288 535Z M1310 435 l4 4 M1325 420 l2 6 M1345 425 l-2 6 M1360 420 l-2 6 M1372 432 l-2 6 M1342 445 h4",
      "M1035 460 L1100 455 Q1112 455 1114 470 L1119 520 Q1119 532 1108 534 L1050 550 Q1040 550 1036 540 L1027 485Z M1040 460 q4-16 22-12 q22-10 28 8 M1060 465 l20-4 M1097 467 h3 M1230 480 q10-30 20 4 Q1262 500 1258 540 L1258 578 L1188 548 Q1200 540 1202 510 Q1210 475 1230 480Z M1240 505 q10-5 10 15 q-2 20-10 18 q-6-16 0-33Z M1212 568 q8 22 20 6",
      "M908 578 Q908 530 940 530 Q972 535 974 580Z M884 555 Q890 530 908 528 Q918 535 905 560Z M970 535 Q998 530 1000 570 L980 566Z M834 525 l8 2 l2 10 l12 0 l2 16 l-6 4 l4 12 l-12 6 l-4 10 l-10 0 l-4-10 l-14-2 l0-14 l4-6 l-4-14 l12-2Z M735 672 L805 678 L808 695 L819 692 L815 728 L805 722 L798 735 L738 728Z",
      "M1010 700 Q995 620 995 590 Q1000 575 1030 600 Q1035 580 1040 575 Q1065 600 1060 620 Q1045 660 1015 650 Q1025 610 1030 600 M1010 630 L1012 680 M995 740 Q995 680 1020 675 M1015 670 Q1055 660 1060 720 Q1055 760 1020 758 Q990 750 995 700 Q1015 730 1032 720",
      "M1135 670 Q1160 665 1150 625 Q1180 610 1200 650 L1222 740 Q1220 760 1205 765 L1150 782 Q1135 780 1135 760 L1128 690Z M1175 622 Q1200 640 1228 750 L1210 762 M1147 690 l10 8 l-8 8 M1188 682 l-10 8 l10 4 M1160 735 L1185 725 M1168 732 q4 20 14 12 l0-18 M1175 778 L1180 810 Q1190 822 1194 805 L1190 770",
      "M1248 700 Q1270 705 1300 688 Q1350 680 1352 730 Q1350 760 1325 775 L1322 830 Q1308 850 1290 825 Q1270 800 1245 785 Q1245 760 1262 755 Q1245 720 1248 700Z M1445 580 L1470 605 L1460 610 L1466 628 L1455 630 L1450 612 L1440 620Z M1545 540 L1565 550 M1545 540 L1552 630 L1568 635",
      "M1445 680 Q1465 700 1475 705 Q1490 720 1480 730 Q1510 735 1495 755 Q1520 745 1515 790 Q1480 770 1420 810 Q1405 790 1418 765 Q1415 740 1430 735 Q1425 715 1440 712 Q1435 690 1445 680Z M1418 768 Q1460 770 1495 740 M1430 738 Q1460 740 1480 712 M1430 810 L1465 872 Q1490 875 1515 855 L1515 785 M1432 815 l10-5 l8 8 l10-14 l10 8 l8-14 l10 6 l10-14 l10 4",
      "M140 735 Q125 790 150 850 Q165 870 155 900 Q155 940 175 962 Q190 965 195 945 L182 910 M205 835 Q175 840 155 820 Q145 800 142 735 M235 785 Q255 790 245 850 Q235 870 220 865 Q200 850 205 800 Q215 780 235 785Z M240 785 Q235 750 270 750 Q315 765 318 820 Q310 845 280 855 L250 862 M285 855 L288 900 Q270 930 275 950 Q290 960 295 930 M185 905 Q190 945 205 960 Q218 960 212 925 L240 920 Q240 955 260 962 Q275 960 262 925 L260 905 M278 800 h2 M302 785 h2 M295 820 q12 8 10-12",
      "M390 790 Q440 770 520 746 Q535 755 543 870 Q490 895 415 908 Q405 900 390 800Z M402 800 L512 762 L530 860 L425 893Z M415 858 L455 828 L480 852 L485 835 L525 850 M425 775 L485 732 L510 748 M415 912 L445 938 L490 895 M388 835 L385 850 L398 880 M538 800 l8 20 l-5 12",
      "M570 778 Q580 760 595 765 L606 790 L602 705 Q615 695 620 715 L628 775 M628 710 Q640 700 650 712 L646 800 Q660 810 655 850 Q650 880 620 884 Q590 880 580 850 L580 800 L570 785 M600 818 Q610 800 630 812 L628 838 M600 790 Q605 825 628 810 M675 905 L678 860 Q690 830 708 825 L718 838 L728 822 Q765 840 768 878Z M750 758 l8 0 l2 22 l18-4 l0 8 l-16 10 l6 18 l-8 2 l-8-16 l-10 10 l-4-6 l8-14 l-8-6Z",
      "M848 740 L848 728 Q860 715 870 728 M905 672 q8-25 16 0 M950 700 Q965 668 985 670 Q990 690 960 715 M965 745 q18 0 18 15 l-24-4 M905 805 l2 28 l10-2 l2-28 M885 700 l10 14 M922 676 l-2 24 M945 702 l-14 16 M954 745 l-22-6 M865 740 l22 0 M875 775 l20-18 M910 800 l0-25 M942 785 l-16-20",
      "M980 800 Q1040 785 1100 765 Q1110 768 1112 790 L1135 890 Q1132 905 1120 908 L1125 935 L1105 915 L1085 912 L1012 945 Q1005 940 1002 925 L978 820Z M1025 880 Q1050 875 1068 862 Q1065 900 1042 892 Q1028 895 1025 880Z M1035 878 v12 M1045 875 v14 M1055 870 v12 M1016 856 q10-8 18 2 M1092 885 l6 12 l10-26 M1104 880 l4 10 l8-20",
      "M1180 900 Q1180 890 1200 898 L1235 885 Q1260 885 1272 868 Q1290 880 1285 910 Q1300 950 1280 980 Q1250 1000 1215 990 Q1185 970 1190 930Z M1235 935 l10 0 l-5 12 M1228 950 q8 10 14 0 q10 4 12-6 M1325 880 Q1345 870 1348 920 Q1345 945 1320 945 L1295 942 M1340 950 Q1355 985 1352 1035 M1230 998 L1240 1035 M1280 990 Q1290 1020 1290 1035 M1325 1005 Q1310 1010 1308 1035",
      "M728 962 q8-16 14 0 q8-14 14 4 q-2 10-16 18Z M768 952 q10-16 14-2 q12-14 16 4 q-4 10-20 16Z M752 992 Q770 996 785 985 Q780 1015 762 1010Z M845 1035 L845 925 Q848 915 860 918 L960 916 Q970 920 970 935 L970 1035 M868 950 h8 v25 h12 v-25 h8 v60 h-8 v-26 h-12 v26 h-8Z M904 974 h12 v36 h-12Z M904 950 h12 v14 h-12Z",
      "M585 1018 L592 930 L638 965 L608 985Z M318 990 L385 935 Q400 925 405 930 L400 955 L340 1020 Q325 1020 312 1005Z M375 942 L400 960 M325 985 l20 30 M415 1010 Q415 965 435 962 Q450 970 460 972 Q485 985 482 1030 M470 962 q8 10 0 25 M55 1035 L58 990 Q65 980 80 983 L275 1003 Q292 1008 292 1035 M68 1035 L72 1010 L265 1025",
      "M1388 955 L1478 938 L1470 975 L1475 1022 L1395 1032Z M1405 970 L1455 965 l0 10 L1405 982Z M1408 990 L1445 985 l0 10 L1408 1002Z M1075 1010 Q1090 990 1110 1035 M1130 970 Q1145 950 1150 1020 M1150 1030 L1165 990 Q1180 980 1175 1000 L1165 1035",
      "M0 690 L22 685 L42 825 L0 835 M1565 665 Q1545 665 1543 700 L1550 820 Q1550 830 1565 828 M1535 220 l20-6 l10 30 M1535 220 l5 22 l14-2 l-4 24 l16-4 M0 20 q16-2 14 8 l14 4 l-2 14 l20 6 l0 16 l-18 6 l-2 14 l-14 2 l-4 14 l-8-2",
    ],
  },
];

const glyphs = (b: Band, list: Mark[], d: string, key: string) =>
  list.map(([x, y, r], i) => (
    <path
      key={key + i}
      d={d}
      transform={`translate(${b.ox + x * b.sx} ${b.oy + y * b.sy}) rotate(${(i % 3) * 7 - 5}) scale(${r})`}
      vectorEffect="non-scaling-stroke"
    />
  ));

function Wallpaper() {
  return (
    <svg className="absolute inset-0 h-full w-full" aria-hidden="true">
      <defs>
        <pattern id="doodles" width="688" height="848" patternUnits="userSpaceOnUse">
          <g fill="none" stroke="#d9d0cb" strokeWidth="1.5" strokeLinecap="round" strokeLinejoin="round">
            {bands.map((b, n) => (
              <g key={n}>
                {b.dots.map(([x, y, r], i) => (
                  <circle key={i} cx={b.ox + x * b.sx} cy={b.oy + y * b.sy} r={r} />
                ))}
                {glyphs(b, b.stars, STAR, "st")}
                {glyphs(b, b.sparks, SPARK, "sp")}
                {glyphs(b, b.hearts, HEART, "he")}
                {glyphs(b, b.clouds, CLOUD, "cl")}
                {glyphs(b, b.drops, DROP, "dr")}
                <g transform={`translate(${b.ox} ${b.oy}) scale(${b.sx} ${b.sy})`}>
                  {b.ovals.map(([cx, cy, rx, ry], i) => (
                    <ellipse key={i} cx={cx} cy={cy} rx={rx} ry={ry} vectorEffect="non-scaling-stroke" />
                  ))}
                  {b.paths.map((d, i) => (
                    <path key={i} d={d} vectorEffect="non-scaling-stroke" />
                  ))}
                </g>
              </g>
            ))}
          </g>
        </pattern>
      </defs>
      <rect width="100%" height="100%" fill="url(#doodles)" />
    </svg>
  );
}

/* ------------------------------- Small pieces ------------------------------ */

function WhatsAppBadge({ box, glyph }: { box: string; glyph: number }) {
  return (
    <span className={`flex shrink-0 items-center justify-center rounded-full bg-[#30d46e] text-white ${box}`}>
      <FaWhatsapp size={glyph} />
    </span>
  );
}

function Logo() {
  return (
    <svg width="28" height="44" viewBox="0 0 28 44" fill="none" stroke="#45c3c1" strokeWidth="3.8">
      <path d="M5.500 7C8.500 2.500 15 1.500 19.500 5C25 9.500 24.500 17 20.500 20.500" strokeLinecap="round" />
      <path d="M3 25.500C5 20.500 9 18.500 14 18.700C21 19 23.800 23.500 23.300 30C22.500 37 18.500 40.500 13 40.500C7.500 40.500 4 37.500 3 33" />
      <path d="M8.500 26.300C10 24 12 23.300 15 23.500L20 25" strokeWidth="3" />
      <path d="M1.200 15L4.500 18L2 21.500" strokeWidth="2.800" />
    </svg>
  );
}

function Avatar() {
  return (
    <svg width="42" height="42" viewBox="0 0 42 42">
      <defs>
        <clipPath id="avatar-clip">
          <circle cx="21" cy="21" r="21" />
        </clipPath>
        <linearGradient id="avatar-tone" x1="0" y1="0" x2="1" y2="1">
          <stop offset="0" stopColor="#c6c6c6" />
          <stop offset="1" stopColor="#8e9092" />
        </linearGradient>
      </defs>
      <g clipPath="url(#avatar-clip)">
        <rect width="42" height="42" fill="#fff" />
        <path
          fill="url(#avatar-tone)"
          d="M21 2C15 2 10.500 5 10.500 11L10.800 16.500C9 16.500 9 18 9.500 20C10 22 10.500 22.500 11.500 22.500C12 26 13.500 28 15 29.500V32.500C13 34 7 33.500 2 36V42H40V36C35 33.500 29 34 27 32.500V29.500C29 28 30 26 30.500 22.500C31.500 22.500 32 22 32.500 20C33 18 33 16.500 31.500 16.500L32 11C31 5 27 2 21 2Z"
        />
      </g>
    </svg>
  );
}

const mainNav = [MdDashboard, MdTextsms, MdPortrait, MdSettings, MdPowerSettingsNew];
const footNav = [MdPermPhoneMsg, MdHelpCenter, MdGavel, MdRule];

function Sidebar() {
  return (
    <aside className="relative z-20 flex h-full w-[100px] shrink-0 flex-col items-center bg-[#050505] text-[#cdcdcd] shadow-[0_0_28px_rgba(0,0,0,0.5)]">
      <div className="flex h-[86px] items-start pt-[24px] pr-1">
        <Logo />
      </div>
      <div className="h-[2px] w-[62px] bg-[#3c3c3c]" />
      <div className="flex h-[101px] items-start pt-[25px]">
        <Avatar />
      </div>
      <div className="h-px w-[62px] bg-[#444]" />
      <nav className="mt-[11px] flex flex-col">
        {mainNav.map((Icon, i) => (
          <a key={i} className="flex h-[68.8px] w-[100px] items-center justify-center pr-px">
            <Icon size={31} />
          </a>
        ))}
      </nav>
      <div className="mt-auto h-[2px] w-[62px] bg-[#3c3c3c]" />
      <nav className="mt-[11px] mb-[30px] flex flex-col">
        {footNav.map((Icon, i) => (
          <a key={i} className="flex h-[68.8px] w-[100px] items-center justify-center pr-px">
            <Icon size={31} />
          </a>
        ))}
      </nav>
    </aside>
  );
}

function TopBar() {
  return (
    <header className="relative z-10 flex h-[62px] shrink-0 items-start bg-[#e81e63] pl-[42px] shadow-[0_4px_18px_rgba(0,0,0,0.32)]">
      <div className="mt-[13px] flex h-[38px] w-[500px] items-start rounded-[9px] border border-[#808080] bg-[#eee] text-xl">
        <button className="-mt-[9px] flex h-[53px] w-[249px] shrink-0 items-center justify-center rounded-lg bg-white pb-px text-[21px] font-bold tracking-[0.1px] text-[#e81e63] shadow-[0_2px_14px_rgba(0,0,0,0.6)]">
          Support
        </button>
        <button className="flex h-full flex-1 items-center justify-center pb-[2px] text-[#5a5a5a]">Team</button>
      </div>
    </header>
  );
}

function ContactsPanel() {
  return (
    <section className="flex w-[486px] shrink-0 flex-col bg-white">
      <div className="mr-px flex h-[120px] flex-col border-b border-[#808080] bg-[#eee]">
        <div className="flex h-[63px] items-center pl-[52px] text-lg leading-none text-black">
          <span className="w-[195px] font-bold tracking-[-0.3px]">Unassigned</span>
          <span className="w-[142px] font-light">Open</span>
          <span className="font-light">Close</span>
        </div>
        <div className="flex pl-[30px] text-[#a9a9a9]">
          <MdSearch size={30} className="mt-[5px]" />
          <div className="ml-[17px] h-[45px] w-[395px] border-b border-[#d2d2d2] pt-[11px] text-lg leading-[26px] tracking-[-0.2px]">
            Search Contacts
          </div>
        </div>
      </div>
      <div className="mr-px flex h-[88px] bg-[#ebebeb] pr-3">
        <div className="pt-[25px] pl-[13px]">
          <WhatsAppBadge box="h-[37px] w-[37px]" glyph={27} />
        </div>
        <div className="flex-1 pt-[18px] pl-[13px]">
          <div className="flex h-[32px] items-center text-[#f44336]">
            <MdWarningAmber size={30} />
            <span className="ml-[6px] text-xl font-medium tracking-[0.1px]">Robert</span>
          </div>
          <div className="-mt-[2px] text-[17px] leading-[22px] font-light text-[#2b3442]">Hello</div>
        </div>
        <div className="pt-[29px] text-base tracking-[0.25px] text-[#858585]">Yesterday</div>
      </div>
    </section>
  );
}

function Conversation() {
  return (
    <section className="flex min-w-0 flex-1 flex-col border-l-2 border-[#808080]">
      <div className="flex h-[75px] shrink-0 items-center bg-[#eee] pr-[13px] pl-[12px]">
        <WhatsAppBadge box="h-[63px] w-[63px]" glyph={45} />
        <span className="ml-[14px] pb-[2px] text-xl tracking-[0.15px] text-[#f47f7b]">Robert</span>
        <span className="ml-auto">
          <WhatsAppBadge box="h-[30px] w-[30px]" glyph={21} />
        </span>
      </div>
      <div className="relative flex-1 bg-[#e4dcd6]">
        <Wallpaper />
        <div className="relative pt-[60px] pl-[19px]">
          <div className="relative h-[70px] w-[80px] rounded-lg bg-white pt-[13px] pl-[8px] shadow-[0_1px_3px_rgba(0,0,0,0.12)]">
            <svg className="absolute top-[44px] -left-[13px]" width="14" height="13">
              <path d="M14 0V13H0Z" fill="#fff" />
            </svg>
            <div className="text-[17px] leading-[24px] font-light text-[#2b3442]">Hello</div>
            <div className="mt-[5px] flex items-center">
              <span className="w-[44px] text-[13px] leading-[20px] font-light text-[#9a9a9a]">14:54</span>
              <WhatsAppBadge box="h-[19px] w-[19px]" glyph={14} />
            </div>
          </div>
        </div>
        <div className="absolute top-[17px] left-[545px] h-[50px] w-[157px] rounded-[20px] bg-[#15bbd1]" />
        <div className="absolute top-[25px] left-[539.5px] flex w-[169px] flex-col gap-3 text-sm leading-none font-medium text-white">
          <button className="relative z-0 order-2 h-[50px] rounded-[25px] bg-[#e81e63] pb-[2px] shadow-[0_2px_4px_rgba(233,30,99,0.35)]">
            ASSIGN
          </button>
          <button className="order-1 h-[50px] rounded-[25px] bg-[#808080] pb-[2px] text-[#f2f2f2] shadow-[0_6px_16px_rgba(0,0,0,0.25)]">
            UNASSIGNED
          </button>
        </div>
      </div>
    </section>
  );
}

export default function App() {
  return (
    <div className="flex h-[1080px] w-[1920px] overflow-hidden bg-[#ededed] font-[Roboto,sans-serif]">
      <Sidebar />
      <div className="flex min-w-0 flex-1 flex-col">
        <TopBar />
        <main className="mt-[26px] mr-[19px] ml-[19px] flex h-[972px] bg-white pt-[23px] pr-[23px] pb-[24px] pl-[23px]">
          <div className="flex min-w-0 flex-1 border border-[#808080]">
            <ContactsPanel />
            <Conversation />
          </div>
        </main>
      </div>
    </div>
  );
}
